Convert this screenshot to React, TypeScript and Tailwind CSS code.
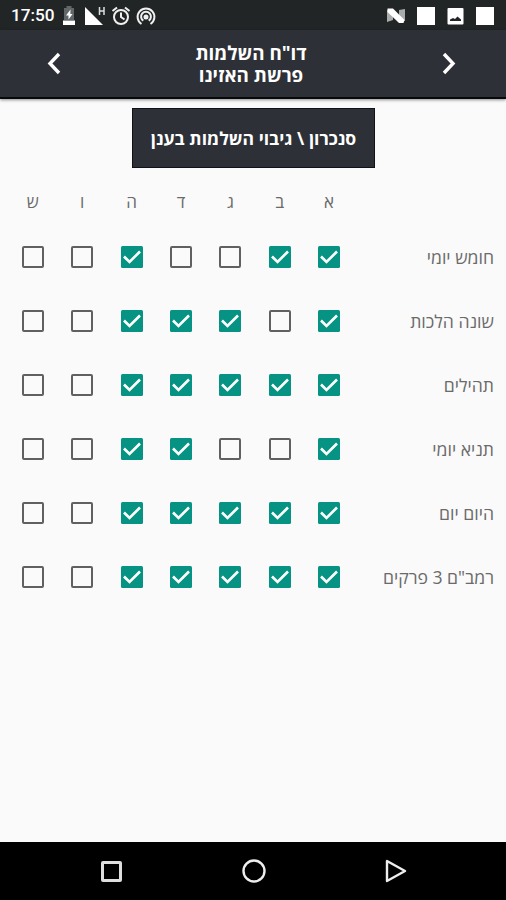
const days = ["א", "ב", "ג", "ד", "ה", "ו", "ש"]

type Row = {
  title: string
  done: number[]
}

const rows: Row[] = [
  { title: "חומש יומי", done: [1, 1, 0, 0, 1, 0, 0] },
  { title: "שונה הלכות", done: [1, 0, 1, 1, 1, 0, 0] },
  { title: "תהילים", done: [1, 1, 1, 1, 1, 0, 0] },
  { title: "תניא יומי", done: [1, 0, 0, 1, 1, 0, 0] },
  { title: "היום יום", done: [1, 1, 1, 1, 1, 0, 0] },
  { title: 'רמב"ם 3 פרקים', done: [1, 1, 1, 1, 1, 0, 0] }
]

const StatusBar = () => (
  <div className="flex h-[30px] items-center justify-between bg-[#212526] pl-[11px] pr-3 pt-px">
    <div className="flex items-center">
      <span className="w-[51px] pt-px text-[17.2px] leading-none font-medium text-white font-[Roboto]">17:50</span>
      <svg className="h-[19px] w-[14px]" viewBox="0 0 14 19">
        <path d="M4.5 0h5v2H12v12H2V2h2.500z" fill="#62676a" />
        <path d="M1 14.500h12V19H1z" fill="#fff" />
        <path d="M8.500 3.500 4 9.500h2.500v4L10.500 8H8.300z" fill="#fff" />
      </svg>
      <svg className="ml-2 h-[20px] w-[22px]" viewBox="0 0 22 20">
        <path d="M1 1v18h18z" fill="#fff" />
        <path d="M15.500 1v8M20 1v8M15.500 5H20" stroke="#ddd" strokeWidth="1.500" />
      </svg>
      <svg className="ml-[5px] h-[20px] w-[20px]" viewBox="0 0 20 20" fill="none" stroke="#f0f0f0" strokeWidth="2">
        <circle cx="10" cy="11" r="7" />
        <path d="M1.500 5 6 1.500M18.500 5 14 1.500M10 6.500V11l3.500 2.500" />
      </svg>
      <svg className="ml-[5px] h-[20px] w-[20px]" viewBox="0 0 20 20" fill="none" stroke="#f0f0f0" strokeWidth="2">
        <path d="M5.500 18a8.400 8.400 0 1 1 9 0M7.300 14.700a4.900 4.900 0 1 1 5.400 0" />
        <circle cx="10" cy="11" r="1.500" fill="#f0f0f0" />
      </svg>
    </div>
    <div className="flex items-center">
      <svg className="mr-[11px] h-[17px] w-[20px]" viewBox="0 0 20 17">
        <path d="M1 3l6 1v9l-6 2zM13 3l6-1v12l-6-2z" fill="#a9abac" />
        <path d="M1.500 1.500H7L18.500 13l-1 3H13L1.500 5z" fill="#fff" />
      </svg>
      <div className="mr-3 h-[18px] w-[18px] bg-white" />
      <svg className="mr-3 h-[18px] w-[17px]" viewBox="0 0 17 18">
        <rect x="0.500" y="1" width="16" height="16.500" rx="1" fill="#fff" />
        <path d="M3 14v-1.500l3-1.500 2 1 2.500-2.500 3.500 3V14z" fill="#212526" />
      </svg>
      <div className="h-[18px] w-[18px] bg-white" />
    </div>
  </div>
)

const Header = () => (
  <div className="flex h-[69px] items-center justify-between border-b-2 border-[#07090b] bg-[#2d3036] pl-[44px] pr-[48px] shadow-[0_1px_3px_rgba(0,0,0,0.45)]">
    <svg className="mb-px h-6 w-5" viewBox="0 0 20 24" fill="none" stroke="#fff" strokeWidth="3.400">
      <path d="M15 3 6 12.500 15 22" />
    </svg>
    <h1 className="pt-px text-center text-[18.8px] leading-[22px] font-bold text-white" dir="rtl">
      <span className="block">דו"ח השלמות</span>
      <span className="block">פרשת האזינו</span>
    </h1>
    <svg className="mb-px h-6 w-5" viewBox="0 0 20 24" fill="none" stroke="#fff" strokeWidth="3.400">
      <path d="M6 3l9 9.500L6 22" />
    </svg>
  </div>
)

const Checkbox = ({ checked }: { checked: boolean }) =>
  checked ? (
    <svg className="h-[22px] w-[22px]" viewBox="0 0 22 22" role="checkbox" aria-checked="true">
      <rect width="22" height="22" rx="1.500" fill="#069383" />
      <path d="M3 10.500 8.500 16 19 5.500" fill="none" stroke="#fff" strokeWidth="2.600" />
    </svg>
  ) : (
    <div className="h-[22px] w-[22px] rounded-[2px] border-2 border-[#606060]" role="checkbox" aria-checked="false" />
  )

const NavBar = () => (
  <div className="flex h-[58px] items-center justify-between bg-black pl-[101px] pr-[99px]">
    <div className="h-[21px] w-[21px] rounded-[2px] border-[3px] border-[#dedede]" />
    <svg className="h-6 w-6" viewBox="0 0 24 24" fill="none" stroke="#eee" strokeWidth="2.400">
      <circle cx="12" cy="12" r="10.500" />
    </svg>
    <svg className="h-6 w-[22px]" viewBox="0 0 22 24" fill="none" stroke="#eee" strokeWidth="2.400" strokeLinejoin="round">
      <path d="M2 2v20l18-10z" />
    </svg>
  </div>
)

const App = () => {
  return (
    <div className="flex h-[900px] w-[506px] flex-col overflow-hidden bg-[#fafafa] font-['Open_Sans',sans-serif]">
      <StatusBar />
      <Header />
      <div className="flex flex-1 flex-col" dir="rtl">
        <button className="mt-[9px] mr-[131px] h-[60px] w-[243px] self-start border border-[#101215] bg-[#2d3036] text-[17.6px] font-bold whitespace-nowrap text-white">
          סנכרון \ גיבוי השלמות בענן
        </button>
        <div className="mt-[15px] mb-0.5 grid h-[40px] grid-cols-[140.200px_repeat(7,49.400px)] items-center pr-3 pb-0.5 text-[17px] text-[#6a6a6a]">
          <span />
          {days.map(day => (
            <span key={day} className="text-center">
              {day}
            </span>
          ))}
        </div>
        {rows.map(row => (
          <div key={row.title} className="grid h-16 grid-cols-[140.200px_repeat(7,49.400px)] items-center pr-3">
            <span className="text-[17.600px] whitespace-nowrap text-[#6a6a6a]">{row.title}</span>
            {row.done.map((value, index) => (
              <span key={index} className="flex justify-center">
                <Checkbox checked={value === 1} />
              </span>
            ))}
          </div>
        ))}
      </div>
      <NavBar />
    </div>
  )
}

export default App
